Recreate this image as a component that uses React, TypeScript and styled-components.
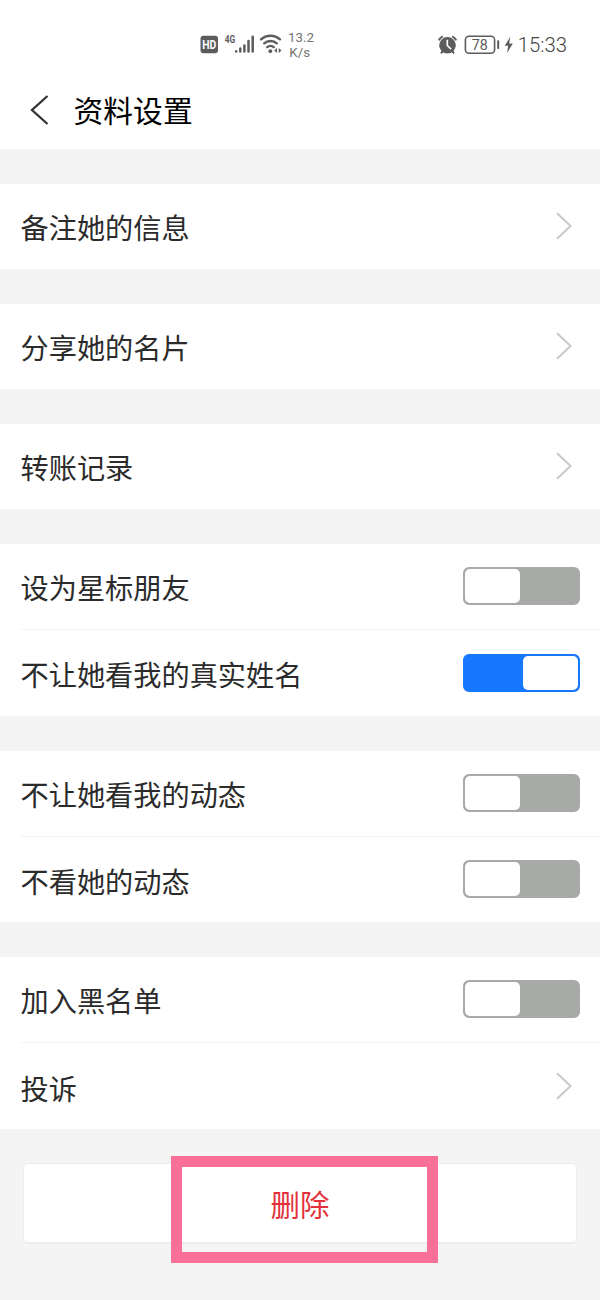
import React from "react";
import styled, { createGlobalStyle } from "styled-components";

const GlobalStyle = createGlobalStyle`
  * { box-sizing: border-box; }
  body { margin: 0; background: #f4f4f4; }
`;

const Screen = styled.main`
  width: 600px;
  height: 1300px;
  overflow: hidden;
  background: #f4f4f4;
  color: #2b2b2b;
  font-family: "Noto Sans CJK SC", sans-serif;
  font-weight: 400;
`;

const Header = styled.header`
  height: 149px;
  background: #fff;
`;

const StatusBar = styled.div`
  height: 72px;
  padding: 17px 33px 0 200px;
  display: flex;
  justify-content: space-between;
  align-items: center;
  color: #5c5c5c;
  font-family: Roboto, sans-serif;
`;

const StatusGroup = styled.div`
  display: flex;
  align-items: center;
`;

const NetSpeed = styled.div`
  margin-left: 5px;
  font-size: 13.4px;
  line-height: 15px;
  color: #737373;
`;

const Clock = styled.time`
  margin-left: 4px;
  padding-top: 1px;
  font-size: 20.3px;
  line-height: 24px;
  font-weight: 300;
  color: #444;
`;

const TitleBar = styled.div`
  height: 75px;
  padding-left: 30px;
  display: flex;
  align-items: center;
  gap: 24.5px;
`;

const Title = styled.h1`
  margin: 0;
  padding-bottom: 2px;
  font-size: 29.8px;
  line-height: 40px;
  font-weight: 400;
  color: #000;
`;

const Card = styled.section<{ $height: number }>`
  height: ${(p) => p.$height}px;
  margin-top: 35px;
  background: #fff;
  display: flex;
  flex-direction: column;
`;

const Label = styled.span`
  font-size: 28.2px;
  line-height: 40px;
  padding: 2px 0 0 0.5px;
`;

const Row = styled.div`
  flex: 0 0 85px;
  padding: 0 20px 1px 0;
  margin-left: 20px;
  display: flex;
  align-items: center;
  justify-content: space-between;

  & + & {
    flex: 1;
    padding-bottom: 0;
    border-top: 1px solid #f4f4f4;
  }

  & + & ${Label} {
    padding-top: 3px;
  }
`;

const Switch = styled.button<{ $on?: boolean }>`
  width: 117px;
  height: 38px;
  padding: 0;
  border: 2px solid ${(p) => (p.$on ? "#1677ff" : "#a8aaa7")};
  border-radius: 6px;
  background: ${(p) => (p.$on ? "#1677ff" : "#a8aaa7")};
  display: flex;
  justify-content: ${(p) => (p.$on ? "flex-end" : "flex-start")};
`;

const Knob = styled.span`
  width: 55px;
  height: 34px;
  border-radius: 5px;
  background: #fff;
`;

const Arrow = styled.svg`
  margin-right: 7px;
`;

const Footer = styled.footer`
  padding: 34px 23px 0;
`;

const DeleteButton = styled.button`
  position: relative;
  width: 554px;
  height: 81px;
  padding: 0 0 1px;
  border: 1px solid #ececec;
  border-bottom-width: 2px;
  border-radius: 5px;
  background: #fff;
  color: #e3313c;
  font: 400 29.5px/40px "Noto Sans CJK SC", sans-serif;
`;

const Highlight = styled.span`
  position: absolute;
  left: 147px;
  top: -8px;
  width: 267px;
  height: 107px;
  border: 11px solid #f87097;
`;

type Item = { label: string; kind: "link" | "on" | "off" };

const groups: { height: number; items: Item[] }[] = [
  { height: 85, items: [{ label: "备注她的信息", kind: "link" }] },
  { height: 85, items: [{ label: "分享她的名片", kind: "link" }] },
  { height: 85, items: [{ label: "转账记录", kind: "link" }] },
  {
    height: 171.5,
    items: [
      { label: "设为星标朋友", kind: "off" },
      { label: "不让她看我的真实姓名", kind: "on" },
    ],
  },
  {
    height: 171.5,
    items: [
      { label: "不让她看我的动态", kind: "off" },
      { label: "不看她的动态", kind: "off" },
    ],
  },
  {
    height: 172,
    items: [
      { label: "加入黑名单", kind: "off" },
      { label: "投诉", kind: "link" },
    ],
  },
];

const NetworkIcons = () => (
  <svg width="83" height="28" viewBox="200 31 83 28" fill="#5c5c5c" fontFamily="Roboto, sans-serif">
    <rect x="200.5" y="35.8" width="17.5" height="17.5" rx="3" />
    <text x="202.2" y="48.9" fontSize="12" fontWeight="700" fill="#fff" textLength="14" lengthAdjust="spacingAndGlyphs">HD</text>
    <text x="224.8" y="43" fontSize="11" fontWeight="700" textLength="10.5" lengthAdjust="spacingAndGlyphs">4G</text>
    <g stroke="#5c5c5c" strokeWidth="2.5" strokeLinecap="round">
      <path d="M236.2 51.2v.3M240.3 48.5v3M244.4 45.5v6M248.5 41v10.5M252.7 36.8v14.7" />
    </g>
    <g fill="none" stroke="#5c5c5c" strokeWidth="2.3" strokeLinecap="round">
      <path d="M261 39.4a14.2 14.2 0 0 1 19 0M264.2 43.4a9.4 9.4 0 0 1 12.6 0M267.2 47.2a5 5 0 0 1 6.6 0" />
    </g>
    <circle cx="270.3" cy="51.2" r="1.9" />
    <path d="M277 47.9v5l-2.8-2.5zM278.7 47.9v5l2.8-2.5z" />
  </svg>
);

const PowerIcons = () => (
  <svg width="77" height="28" viewBox="436.5 31 77 28" fill="#5c5c5c" fontFamily="Roboto, sans-serif">
    <circle cx="447" cy="45.3" r="8.3" />
    <path d="M438.3 40.3q1-2.7 4-4M455.7 40.3q-1-2.7-4-4M442 51.5l-1.6 1.8M452 51.5l1.6 1.8" fill="none" stroke="#5c5c5c" strokeWidth="2" />
    <path d="M446.8 39.8v5.7l3.8 3.6" fill="none" stroke="#fff" strokeWidth="1.7" />
    <rect x="464.9" y="36.3" width="29.2" height="17" rx="3.5" fill="none" stroke="#5c5c5c" strokeWidth="1.6" />
    <text x="471.3" y="50" fontSize="14.5" textLength="16" lengthAdjust="spacingAndGlyphs">78</text>
    <rect x="496.7" y="40.3" width="2" height="8.7" rx=".8" />
    <path d="M509.8 36.7l-5.6 9h3.5l-1.1 7.3 5.7-9.5h-3.7z" />
  </svg>
);

const Chevron = () => (
  <Arrow width="17" height="28" viewBox="0 0 17 28" fill="none">
    <path d="M1 1.2 14.6 14 1 26.8" stroke="#c9c9c9" strokeWidth="2" />
  </Arrow>
);

export default function App() {
  return (
    <Screen>
      <GlobalStyle />
      <Header>
        <StatusBar>
          <StatusGroup>
            <NetworkIcons />
            <NetSpeed>
              13.2
              <br />
              &#8202;K/s
            </NetSpeed>
          </StatusGroup>
          <StatusGroup>
            <PowerIcons />
            <Clock>15:33</Clock>
          </StatusGroup>
        </StatusBar>
        <TitleBar>
          <svg width="19" height="30" viewBox="0 0 19 30" fill="none">
            <path d="M17.5 1 2 15l15.5 14" stroke="#333" strokeWidth="2.3" />
          </svg>
          <Title>资料设置</Title>
        </TitleBar>
      </Header>
      {groups.map((group) => (
        <Card key={group.items[0].label} $height={group.height}>
          {group.items.map((item) => (
            <Row key={item.label}>
              <Label>{item.label}</Label>
              {item.kind === "link" ? (
                <Chevron />
              ) : (
                <Switch $on={item.kind === "on"} aria-label={item.label}>
                  <Knob />
                </Switch>
              )}
            </Row>
          ))}
        </Card>
      ))}
      <Footer>
        <DeleteButton>
          删除
          <Highlight />
        </DeleteButton>
      </Footer>
    </Screen>
  );
}
